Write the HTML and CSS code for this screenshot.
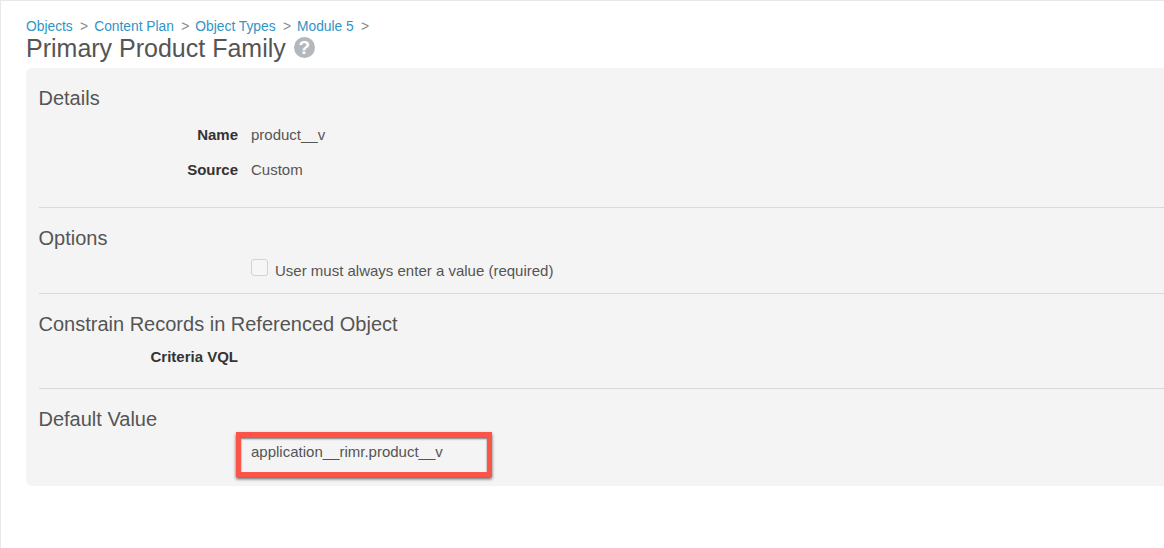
FILE: index.html
```html
<!DOCTYPE html>
<html lang="en">
<head>
    <meta charset="UTF-8">
    <meta name="viewport" content="width=device-width, initial-scale=1.0">
    <title>Primary Product Family</title>
    <link rel="stylesheet" href="styles.css">
</head>
<body>
    <div class="page">
        <div class="breadcrumbs">
            <a href="#">Objects</a><span class="sep">&gt;</span>
            <a href="#">Content Plan</a><span class="sep">&gt;</span>
            <a href="#">Object Types</a><span class="sep">&gt;</span>
            <a href="#">Module 5</a><span class="sep">&gt;</span>
        </div>
        <h1 class="page-title">Primary Product Family <span class="help-icon">?</span></h1>
        <div class="panel">
            <section class="section section-details">
                <h2>Details</h2>
                <div class="field field-name">
                    <div class="field-label">Name</div>
                    <div class="field-value">product__v</div>
                </div>
                <div class="field">
                    <div class="field-label">Source</div>
                    <div class="field-value">Custom</div>
                </div>
            </section>
            <section class="section section-options">
                <h2>Options</h2>
                <div class="field">
                    <div class="field-label"></div>
                    <label class="check-row"><span class="checkbox"></span>User must always enter a value (required)</label>
                </div>
            </section>
            <section class="section section-constrain">
                <h2>Constrain Records in Referenced Object</h2>
                <div class="field">
                    <div class="field-label">Criteria VQL</div>
                </div>
            </section>
            <section class="section section-default">
                <h2>Default Value</h2>
                <div class="highlight-box">application__rimr.product__v</div>
            </section>
        </div>
    </div>
</body>
</html>
```

FILE: styles.css
```css
html, body {
    margin: 0;
    padding: 0;
    height: 100%;
    overflow: hidden;
}
body {
    font-family: "Liberation Sans", Arial, sans-serif;
    font-size: 15px;
    color: #555;
    background-color: #fff;
    border-top: 1px solid #e8e8e8;
    border-left: 1px solid #e8e8e8;
    box-sizing: border-box;
}
.page {
    padding: 18px 0 0 25px;
}
.breadcrumbs {
    font-size: 13.8px;
    line-height: 16px;
    margin-bottom: -1px;
    white-space: nowrap;
}
.breadcrumbs a {
    color: #2f94c6;
    text-decoration: none;
}
.breadcrumbs .sep {
    color: #8a8a8a;
    margin: 0 2.2px 0 7.3px;
}
.page-title {
    margin: 0;
    font-size: 25px;
    font-weight: normal;
    line-height: 28px;
    color: #555;
    white-space: nowrap;
    display: flex;
    align-items: center;
    gap: 8px;
}
.help-icon {
    width: 21px;
    height: 21px;
    border-radius: 50%;
    background-color: #b3b8bd;
    color: #fff;
    font-size: 19px;
    font-weight: bold;
    line-height: 21px;
    text-align: center;
    position: relative;
    top: -1px;
}
.panel {
    margin-top: 6px;
    background-color: #f4f4f4;
    border-radius: 6px 0 0 6px;
    padding: 0 0 0 12.5px;
    height: 418px;
    box-sizing: border-box;
}
.section {
    border-bottom: 1px solid #d9d9d9;
    box-sizing: border-box;
}
.section h2 {
    margin: 0;
    font-size: 20px;
    font-weight: normal;
    line-height: 24px;
    color: #555;
}
.section-details {
    height: 140px;
    padding-top: 18px;
}
.section-options {
    height: 86px;
    padding-top: 18px;
}
.section-constrain {
    height: 95px;
    padding-top: 18px;
}
.section-default {
    border-bottom: 0;
    padding-top: 18px;
}
.field {
    display: flex;
    align-items: center;
    height: 35px;
}
.field-name {
    margin-top: 7px;
}
.section-options .field {
    height: 24px;
    margin-top: 8px;
}
.section-constrain .field {
    height: 24px;
    margin-top: 8px;
}
.field-label {
    width: 199.5px;
    text-align: right;
    font-weight: bold;
    color: #333;
    flex-shrink: 0;
}
.field-value {
    margin-left: 13px;
}
.check-row {
    display: flex;
    align-items: center;
    margin-left: 13px;
}
.checkbox {
    width: 15px;
    height: 15px;
    border: 1px solid #d2d2d2;
    border-radius: 3px;
    background-color: #f6f6f6;
    margin-right: 7px;
    position: relative;
    top: -3px;
}
.highlight-box {
    width: 256px;
    height: 45px;
    margin: 1px 0 0 197.5px;
    padding: 6px 0 0 10px;
    box-sizing: border-box;
    border: 5px solid #fb5448;
    line-height: 18px;
    box-shadow: 0 2px 3px rgba(0, 0, 0, 0.6), inset 0 2px 2px rgba(0, 0, 0, 0.5);
}
```
